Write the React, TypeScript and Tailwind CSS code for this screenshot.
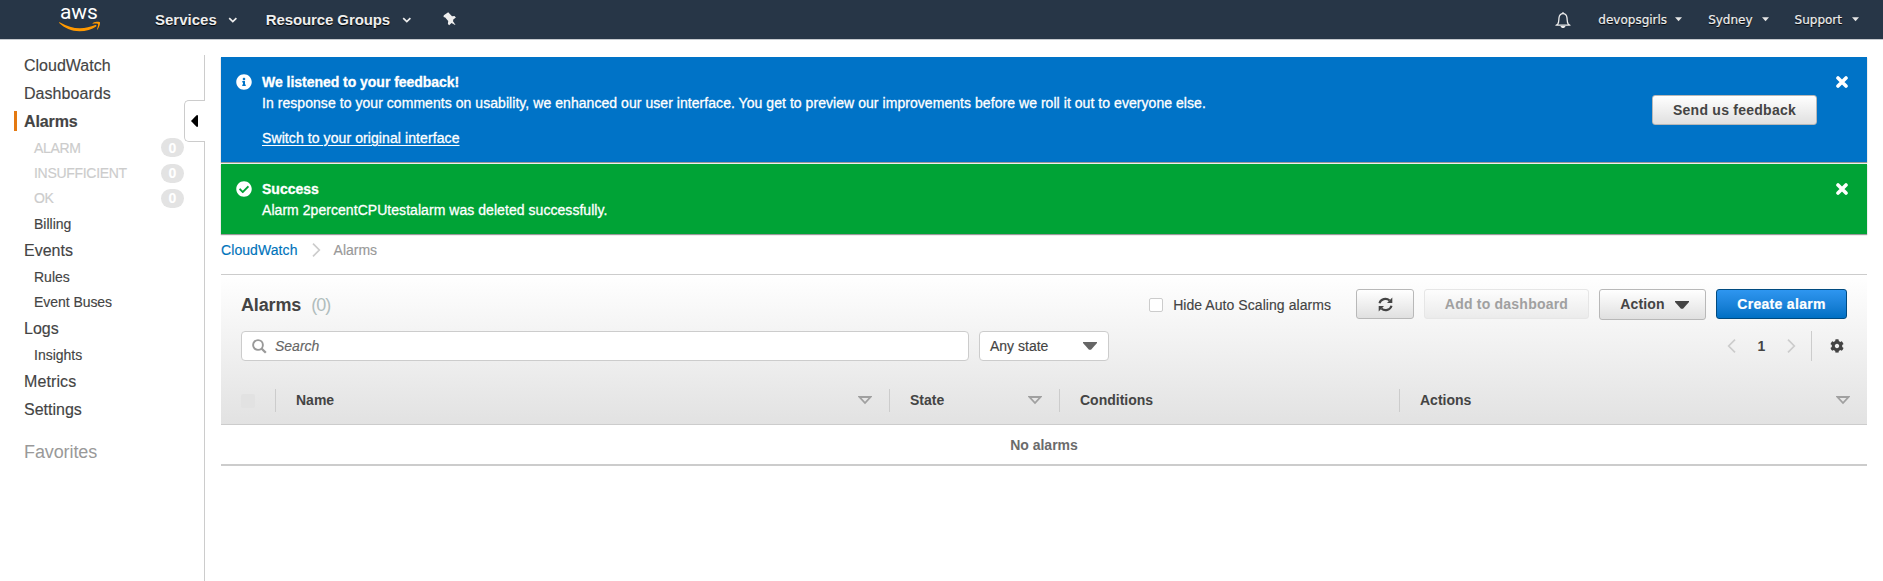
import type { ReactNode } from "react";
import { FaInfoCircle, FaCheckCircle, FaCog } from "react-icons/fa";

const shadow = "[text-shadow:0_1px_1px_#000]";

function Chevron() {
  return (
    <svg width="10" height="8" viewBox="0 0 10 8" className="block">
      <path d="M1.200 2.200 4.800 5.600 8.400 2.200" fill="none" stroke="#eee" strokeWidth="1.700" />
    </svg>
  );
}

function Caret() {
  return (
    <svg width="7" height="5" viewBox="0 0 7 5" className="block">
      <path d="M0 .3h7L3.500 4.300z" fill="#e6e6e6" />
    </svg>
  );
}

function Logo() {
  return (
    <div className="relative ml-[59px] h-[39px] w-[42px]">
      <span className="absolute top-0 left-[1px] font-['Roboto',sans-serif] text-[21px] leading-[25px] tracking-[-0.1px] text-white">
        aws
      </span>
      <svg width="42" height="11" viewBox="0 0 42 11" className="absolute left-0 top-[21px]">
        <path d="M.200 2.100c-.300-.7.300-1 .9-.6C8 5.200 14 7.300 21 7.300c5.500 0 10.500-1.200 15.300-3.200 1-.4 1.600.6.8 1.300C33 8.500 27 10.300 20.500 10.300 12.500 10.300 5.400 7.200.200 2.100z" fill="#f90" />
        <path d="M33.800 1.900C36.500.600 40.400.500 40.900 1.300c.5.900-.4 4.700-2.400 7.200-.3.300-.7.100-.5-.3.600-1.500 1.500-4.400 1-5.100-.5-.6-3.400-.5-5-.4-.5 0-.6-.5-.2-.8z" fill="#f90" />
      </svg>
    </div>
  );
}

function Header() {
  return (
    <header className="flex h-10 items-center border-b border-[#c5c9ce] bg-[#273647] text-[#eee]">
      <Logo />
      <nav className="flex items-center text-[15px] leading-5 font-bold">
        <span className={`ml-[54px] ${shadow}`}>Services</span>
        <span className="ml-[11px]"><Chevron /></span>
        <span className={`ml-7 tracking-[-0.1px] ${shadow}`}>Resource Groups</span>
        <span className="ml-[12px]"><Chevron /></span>
        <svg width="14" height="14" viewBox="0 0 14 14" className="-mt-px ml-[31px] block">
          <path d="M5.200.300 9 4.200 11.500 4 12.900 5.400 10.300 7.600 10 9.300 12.400 12.800 12.100 13.100 8.500 10.900 6.200 13.300 4.900 12 5.200 8.900 2.200 5.400.500 5.100.800 3.200z" fill="#eee" />
        </svg>
      </nav>
      <div className="ml-auto flex items-center font-['DejaVu_Sans',sans-serif] text-[12px] leading-5">
        <svg width="16" height="18" viewBox="0 0 16 18" className="mr-[27px] block">
          <path d="M2.700 13.200C4 11.600 3.700 9.500 4 6.800 4.300 4.300 5.800 2.700 8 2.700s3.700 1.600 4 4.100c.300 2.700 0 4.800 1.300 6.400l1.700 1H1z" fill="none" stroke="#eee" strokeWidth="1.300" strokeLinejoin="round" />
          <path d="M6.800 2.500a1.200 1.200 0 0 1 2.400 0zM5.500 15h5c-.4 1.500-1.400 2-2.500 2s-2.100-.5-2.500-2z" fill="#eee" />
        </svg>
        <span className={`[-webkit-text-stroke:0.2px] ${shadow}`}>devopsgirls</span>
        <span className="mr-[26px] ml-2"><Caret /></span>
        <span className={`[-webkit-text-stroke:0.2px] ${shadow}`}>Sydney</span>
        <span className="mr-[26px] ml-[9px]"><Caret /></span>
        <span className={`[-webkit-text-stroke:0.2px] ${shadow}`}>Support</span>
        <span className="mr-6 ml-[10px]"><Caret /></span>
      </div>
    </header>
  );
}

function Item({ h, sub = false, children }: { h: string; sub?: boolean; children: ReactNode }) {
  return (
    <li className={`flex items-center ${h} ${sub ? "pb-[2px] pl-[34px] text-sm" : "pl-6 text-base"}`}>{children}</li>
  );
}

function StateItem({ h, label }: { h: string; label: string }) {
  return (
    <li className={`flex items-center pr-5 pb-px pl-[34px] text-sm text-[#ccc] ${h}`}>
      <span className="grow tracking-[-0.3px]">{label}</span>
      <span className="flex h-[19px] w-[23px] items-center justify-center rounded-full bg-[#e3e3e3] font-bold text-white">0</span>
    </li>
  );
}

function Sidebar() {
  return (
    <aside className="relative mt-[15px] h-[526px] w-[205px] border-r border-[#ccc] text-[#444]">
      <ul className="-mt-[3px] [-webkit-text-stroke:0.15px]">
        <Item h="h-7">CloudWatch</Item>
        <Item h="h-[27px]"><span className="tracking-[0.05px]">Dashboards</span></Item>
        <li className="flex h-7 items-center pl-[14px] text-base font-bold">
          <span className="mr-[7px] h-5 w-[3px] bg-[#e47911]" />
          <span className="mt-px tracking-[-0.1px]">Alarms</span>
        </li>
        <StateItem h="h-[26px]" label="ALARM" />
        <StateItem h="h-[25px]" label="INSUFFICIENT" />
        <StateItem h="h-[25px]" label="OK" />
        <Item h="h-[27px]" sub>Billing</Item>
        <Item h="h-[26px]">Events</Item>
        <Item h="h-[27px]" sub>Rules</Item>
        <Item h="h-[24px]" sub><span className="tracking-[-0.05px]">Event Buses</span></Item>
        <Item h="h-[28px]">Logs</Item>
        <Item h="h-[26px]" sub>Insights</Item>
        <Item h="h-[26px]"><span className="tracking-[0.1px]">Metrics</span></Item>
        <Item h="h-[29px]">Settings</Item>
      </ul>
      <div className="mt-[16px] pl-6 text-lg leading-6 tracking-[-0.1px] text-[#999]">Favorites</div>
      <button className="absolute top-[45px] -right-px flex h-[42px] w-[21px] items-center rounded-l-[5px] border border-r-0 border-[#ccc] bg-white pl-[6px]">
        <svg width="7" height="12" viewBox="0 0 7 12"><path d="M0 6 5.500.300H7v11.400H5.500z" fill="#000" /></svg>
      </button>
    </aside>
  );
}

function Close() {
  return (
    <svg width="12" height="12" viewBox="0 0 12 12" className="block">
      <path d="M2 2l8 8M10 2l-8 8" stroke="#fff" strokeWidth="3.600" strokeLinecap="round" />
    </svg>
  );
}

const grayBtn = "flex items-center justify-center rounded-[3px] border border-[#b8b8b8] bg-linear-to-b from-white to-[#e0e0e0] text-sm font-bold text-[#444]";

function Banners() {
  return (
    <>
      <section className="flex h-[105px] items-start bg-[#0073c7] pt-[17px] pr-[19px] pl-[15px] text-sm text-white shadow-[0_1px_1px_#999]">
        <FaInfoCircle size={16} className="block" />
        <div className="-mt-[2px] ml-[10px] grow leading-5 [-webkit-text-stroke:0.3px]">
          <p className="font-bold tracking-[-0.03px]">We listened to your feedback!</p>
          <p className="mt-px tracking-[0.053px]">
            In response to your comments on usability, we enhanced our user interface. You get to preview our improvements before we roll it out to everyone else.
          </p>
          <p className="mt-[15px] tracking-[0.09px] underline underline-offset-2">Switch to your original interface</p>
        </div>
        <button className={`mt-[21px] mr-[19px] h-[30px] w-[165px] tracking-[0.25px] ${grayBtn}`}>Send us feedback</button>
        <div className="mt-0.5"><Close /></div>
      </section>
      <section className="mt-[2px] flex h-[70px] items-start bg-[#00a336] pt-[17px] pr-[19px] pl-[15px] text-sm text-white shadow-[0_1px_1px_#999]">
        <FaCheckCircle size={16} className="block" />
        <div className="-mt-[2px] ml-[10px] grow leading-[21px] [-webkit-text-stroke:0.3px]">
          <p className="font-bold">Success</p>
          <p className="tracking-[0.05px]">Alarm 2percentCPUtestalarm was deleted successfully.</p>
        </div>
        <div className="mt-0.5"><Close /></div>
      </section>
    </>
  );
}

function Angle({ left = false }: { left?: boolean }) {
  return (
    <svg width="9" height="14" viewBox="0 0 9 14" className={`block ${left ? "-scale-x-100" : ""}`}>
      <path d="M1 .7 7.300 7 1 13.300" fill="none" stroke="#ccc" strokeWidth="1.700" />
    </svg>
  );
}

function Down({ color }: { color: string }) {
  return (
    <svg width="14" height="8" viewBox="0 0 14 8" className="block">
      <path d="M0 0h14v1L8 7.700H6L0 1z" fill={color} />
    </svg>
  );
}

function Col({ w, label, sort = false }: { w: string; label: string; sort?: boolean }) {
  return (
    <div className={`flex h-[23px] items-center border-l border-[#ccc] pl-5 ${w}`}>
      <span className="-mt-px grow">{label}</span>
      {sort && (
        <svg width="14" height="9" viewBox="0 0 14 9" className="mr-[17px] block">
          <path d="M1.500 1h11L7 7z" fill="none" stroke="#a0a0a0" strokeWidth="1.800" />
        </svg>
      )}
    </div>
  );
}

function Panel() {
  return (
    <section className="mt-[14px] text-sm text-[#444]">
      <div className="h-[151px] border-y border-[#ccc] bg-linear-to-b from-white to-[#e2e2e2]">
        <div className="flex h-[45px] items-start pt-[14px] pr-5 pl-5">
          <h1 className="mt-[4px] text-lg leading-6 font-bold tracking-[-0.15px]">Alarms</h1>
          <span className="mt-[4px] ml-[10px] grow text-lg leading-6 tracking-[-0.9px] text-[#b0bdbd]">(0)</span>
          <span className="mt-[9px] h-[14px] w-[14px] rounded-[2px] border border-[#ccc] bg-white" />
          <span className="mt-[6px] mr-[25px] ml-[10px] leading-5 tracking-[0.06px] [-webkit-text-stroke:0.15px]">Hide Auto Scaling alarms</span>
          <button className={`mr-[10px] h-[30px] w-[58px] ${grayBtn}`}>
            <svg width="15" height="15" viewBox="0 0 15 15">
              <path d="M1.500 6.200A6 5.600 0 0 1 11.600 3.600M13.500 8.800A6 5.600 0 0 1 3.400 11.400" fill="none" stroke="#444" strokeWidth="2.100" />
              <path d="M14.300.600V6H9zM.700 14.400V9H6z" fill="#444" />
            </svg>
          </button>
          <button className="mr-[10px] flex h-[30px] w-[165px] items-center justify-center rounded-[3px] border border-[#e6e6e6] bg-linear-to-b from-[#fdfdfd] to-[#ebebeb] font-bold tracking-[0.22px] text-[#a0a0a0]">
            Add to dashboard
          </button>
          <button className={`mr-[10px] h-[31px] w-[107px] pl-[4px] ${grayBtn}`}>
            <span className="-mt-px mr-[10px] tracking-[0.15px]">Action</span>
            <Down color="#444" />
          </button>
          <button className="flex h-[30px] w-[131px] items-center justify-center rounded-[3px] border border-[#004a80] bg-linear-to-b from-[#2e96f0] to-[#0070c4] font-bold tracking-[0.3px] text-white [-webkit-text-stroke:0.2px]">
            Create alarm
          </button>
        </div>
        <div className="mt-[11px] flex h-[30px] items-center pr-[23px] pl-5">
          <div className="flex h-[30px] w-[728px] items-center rounded-[4px] border border-[#ccc] bg-white pl-[10px]">
            <svg width="15" height="15" viewBox="0 0 15 15">
              <circle cx="6" cy="6" r="4.900" fill="none" stroke="#999" strokeWidth="1.900" />
              <path d="M9.500 9.500 13.800 13.800" stroke="#999" strokeWidth="2.300" />
            </svg>
            <span className="ml-[8px] text-[#666] italic [-webkit-text-stroke:0.15px]">Search</span>
          </div>
          <div className="ml-[10px] flex h-[30px] w-[130px] items-center justify-between rounded-[4px] border border-[#ccc] bg-white pr-[11px] pl-[10px]">
            <span className="[-webkit-text-stroke:0.15px]">Any state</span>
            <Down color="#666" />
          </div>
          <div className="ml-auto flex items-center">
            <Angle left />
            <span className="w-[51px] text-center font-bold">1</span>
            <Angle />
            <span className="ml-[15px] h-[30px] w-px bg-[#ccc]" />
            <FaCog size={14} className="ml-[18px] block" />
          </div>
        </div>
        <div className="mt-[28px] flex items-center pl-5 font-bold">
          <span className="mr-5 h-[14px] w-[14px] rounded-[2px] bg-[#e2e2e2]" />
          <Col w="w-[614px]" label="Name" sort />
          <Col w="w-[170px]" label="State" sort />
          <Col w="w-[340px]" label="Conditions" />
          <Col w="w-[468px]" label="Actions" sort />
        </div>
      </div>
      <div className="flex h-[41px] items-center justify-center border-b-2 border-[#ccc] font-bold text-[#6b6b6b]">No alarms</div>
    </section>
  );
}

export default function App() {
  return (
    <div className="h-[581px] w-[1883px] overflow-hidden bg-white font-['Liberation_Sans',Arial,sans-serif]">
      <Header />
      <div className="flex">
        <Sidebar />
        <main className="mt-[17px] ml-4 w-[1646px]">
          <Banners />
          <div className="mt-[6px] flex h-5 items-center text-sm [-webkit-text-stroke:0.15px]">
            <span className="tracking-[0.08px] text-[#0073bb]">CloudWatch</span>
            <span className="mr-[13px] ml-[14px]"><Angle /></span>
            <span className="text-[#999]">Alarms</span>
          </div>
          <Panel />
        </main>
      </div>
    </div>
  );
}
